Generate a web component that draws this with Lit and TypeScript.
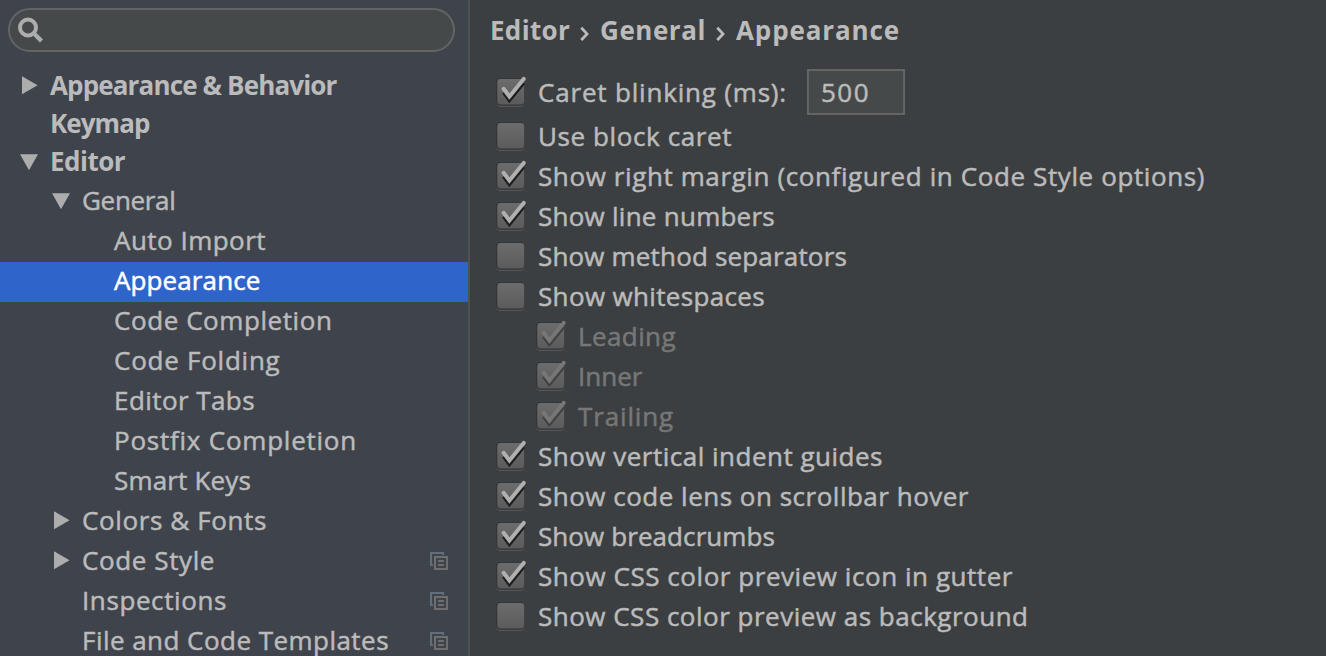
import { LitElement, html, svg, css, nothing } from "lit";
import { customElement, property, query } from "lit/decorators.js";

/** A one-line label whose tracking is adjusted so that it spans a given width. */
@customElement("tracked-label")
class TrackedLabel extends LitElement {
  @property() text = "";
  @property({ type: Number }) span = 0;
  @query("span") private label!: HTMLSpanElement;

  static styles = css`
    :host { display: block; flex: none; white-space: pre; }
    span { display: inline-block; }
  `;

  updated() {
    this.label.style.letterSpacing = "0";
    const natural = this.label.getBoundingClientRect().width;
    this.label.style.letterSpacing = `${(this.span - natural) / this.text.length}px`;
  }

  render() {
    return html`<span>${this.text}</span>`;
  }
}

@customElement("check-box")
class CheckBox extends LitElement {
  @property({ type: Boolean }) checked = false;
  @property({ type: Boolean }) disabled = false;

  static styles = css`
    :host { display: block; flex: none; width: 34px; height: 40px; }
    svg { display: block; }
  `;

  render() {
    const tick = "M9.6 16.8L15.4 24.6L29.7 6.9";
    return html`<svg width="34" height="40" viewBox="0 0 34 40">
      <defs>
        <linearGradient id="face" x1="0" y1="0" x2="0" y2="1">
          <stop offset="0" stop-color="#6c6c6c" />
          <stop offset="1" stop-color="#5b5b5b" />
        </linearGradient>
      </defs>
      <rect x="2.3" y="9" width="28.4" height="26" rx="4.5" fill="#555758" />
      <rect x="2" y="6" width="29" height="27.8" rx="4.5" fill="#333536" />
      <rect x="3.3" y="7" width="27" height="25.4" rx="3.4" fill="url(#face)" />
      ${this.checked
        ? svg`<g fill="none" stroke-width="4" stroke-linejoin="miter">
            <path d="M9.6 20.5L15.4 28.4L29.7 10.8" stroke=${this.disabled ? "#404243" : "#1e1e1e"} stroke-width="3.6" />
            <path d=${tick} stroke=${this.disabled ? "#777777" : "#b0b0b0"} stroke-linecap="round" />
          </g>`
        : nothing}
    </svg>`;
  }
}

interface TreeRow {
  text: string;
  span: number;
  level: number;
  bold?: boolean;
  arrow?: "open" | "closed";
  selected?: boolean;
  project?: boolean;
}

const TREE: TreeRow[] = [
  { text: "Appearance & Behavior", span: 286.5, level: 0, bold: true, arrow: "closed" },
  { text: "Keymap", span: 99.5, level: 0, bold: true },
  { text: "Editor", span: 75, level: 0, bold: true, arrow: "open" },
  { text: "General", span: 93.5, level: 1, arrow: "open" },
  { text: "Auto Import", span: 152, level: 2 },
  { text: "Appearance", span: 146.5, level: 2, selected: true },
  { text: "Code Completion", span: 218.5, level: 2 },
  { text: "Code Folding", span: 166.5, level: 2 },
  { text: "Editor Tabs", span: 141, level: 2 },
  { text: "Postfix Completion", span: 243, level: 2 },
  { text: "Smart Keys", span: 137, level: 2 },
  { text: "Colors & Fonts", span: 185, level: 1, arrow: "closed" },
  { text: "Code Style", span: 133, level: 1, arrow: "closed", project: true },
  { text: "Inspections", span: 145, level: 1, project: true },
  { text: "File and Code Templates", span: 307, level: 1, project: true },
];

interface Option {
  text: string;
  span: number;
  checked?: boolean;
  disabled?: boolean;
  value?: string;
}

const OPTIONS: Option[] = [
  { text: "Caret blinking (ms):", span: 249, checked: true, value: "500" },
  { text: "Use block caret", span: 194 },
  { text: "Show right margin (configured in Code Style options)", span: 667, checked: true },
  { text: "Show line numbers", span: 237, checked: true },
  { text: "Show method separators", span: 309 },
  { text: "Show whitespaces", span: 227 },
  { text: "Leading", span: 98, checked: true, disabled: true },
  { text: "Inner", span: 64.5, checked: true, disabled: true },
  { text: "Trailing", span: 96, checked: true, disabled: true },
  { text: "Show vertical indent guides", span: 345, checked: true },
  { text: "Show code lens on scrollbar hover", span: 431, checked: true },
  { text: "Show breadcrumbs", span: 237, checked: true },
  { text: "Show CSS color preview icon in gutter", span: 475, checked: true },
  { text: "Show CSS color preview as background", span: 490.5 },
];

@customElement("app-root")
class AppRoot extends LitElement {
  static styles = css`
    :host {
      display: flex;
      width: 1326px;
      height: 656px;
      overflow: hidden;
      background: #3c3f41;
      color: #bbbbbb;
      font: 26px/36px "Open Sans", "Noto Sans", sans-serif;
      -webkit-text-stroke: 0.5px currentColor;
    }
    svg { display: block; flex: none; }
    .sidebar {
      box-sizing: border-box;
      width: 470px;
      flex: none;
      background: #3e434c;
      border-right: 2px solid #515151;
      overflow: hidden;
    }
    .search {
      box-sizing: border-box;
      display: flex;
      align-items: center;
      width: 447px;
      height: 44px;
      margin: 8px 0 16px 8px;
      padding: 2px 0 0 8px;
      background: #45494a;
      border: 2px solid #646464;
      border-radius: 22px;
    }
    .row { display: flex; height: 40px; align-items: center; }
    .row.bold { height: 38px; font-weight: 700; -webkit-text-stroke-width: 0; }
    .row.selected { background: #2f65ca; color: #ffffff; }
    .row tracked-label { padding-bottom: 4px; }
    .arrow { width: 32px; flex: none; }
    .level0 { padding-left: 18px; }
    .level1 { padding-left: 50px; }
    .level2 { padding-left: 82px; }
    .project { margin: 0 19px 2px auto; }
    .content { flex: 1; padding-left: 20px; }
    .crumbs {
      display: flex;
      align-items: center;
      height: 40px;
      margin: 10px 0 18px;
      font-weight: 700;
      -webkit-text-stroke-width: 0;
    }
    .option { display: flex; height: 40px; align-items: center; padding-left: 4px; }
    .option check-box { margin-right: 10px; }
    .option.with-field { height: 48px; }
    .option.disabled { padding-left: 44px; color: #777777; }
    .field {
      box-sizing: border-box;
      width: 98px;
      height: 46px;
      margin-left: 20px;
      padding-left: 12px;
      background: #45494a;
      border: 2px solid #646464;
      line-height: 42px;
    }
  `;

  private arrow(kind?: "open" | "closed") {
    return html`<svg class="arrow" width="32" height="38" viewBox="0 0 32 38">
      ${kind === "closed" ? svg`<path d="M4 8.3V26.2L19.6 17.2Z" fill="#adadad" />` : nothing}
      ${kind === "open" ? svg`<path d="M2 10.3H20L11 26.2Z" fill="#adadad" />` : nothing}
    </svg>`;
  }

  private chevron() {
    return html`<svg width="30" height="40" viewBox="0 0 30 40">
      <path d="M11.3 17.8L17 23.9L11.3 30" fill="none" stroke="#bbbbbb" stroke-width="2.8" />
    </svg>`;
  }

  private projectIcon() {
    return html`<svg class="project" width="20" height="20" viewBox="0 0 20 20">
      <path d="M4 14H2V2H14V4" fill="none" stroke="#5f6f7c" stroke-width="2" />
      <path d="M6 6H18V18H6ZM9 10H15M9 14H15" fill="none" stroke="#6e6e6e" stroke-width="2" />
    </svg>`;
  }

  private treeRow(row: TreeRow) {
    return html`<div class="row level${row.level} ${row.bold ? "bold" : ""} ${row.selected ? "selected" : ""}">
      ${this.arrow(row.arrow)}
      <tracked-label .text=${row.text} .span=${row.span}></tracked-label>
      ${row.project ? this.projectIcon() : nothing}
    </div>`;
  }

  private option(o: Option) {
    return html`<div class="option ${o.disabled ? "disabled" : ""} ${o.value ? "with-field" : ""}">
      <check-box .checked=${!!o.checked} .disabled=${!!o.disabled}></check-box>
      <tracked-label .text=${o.text} .span=${o.span}></tracked-label>
      ${o.value
        ? html`<div class="field"><tracked-label .text=${o.value} .span=${49}></tracked-label></div>`
        : nothing}
    </div>`;
  }

  render() {
    return html`
      <div class="sidebar">
        <div class="search">
          <svg width="28" height="28" viewBox="0 0 28 28">
            <circle cx="10" cy="10.5" r="8" fill="none" stroke="#adadad" stroke-width="4" />
            <path d="M15.5 16L23.5 24" stroke="#adadad" stroke-width="4.4" />
          </svg>
        </div>
        ${TREE.map((row) => this.treeRow(row))}
      </div>
      <div class="content">
        <div class="crumbs">
          <tracked-label .text=${"Editor"} .span=${80}></tracked-label>
          ${this.chevron()}
          <tracked-label .text=${"General"} .span=${106}></tracked-label>
          ${this.chevron()}
          <tracked-label .text=${"Appearance"} .span=${164}></tracked-label>
        </div>
        ${OPTIONS.map((o) => this.option(o))}
      </div>
    `;
  }
}
